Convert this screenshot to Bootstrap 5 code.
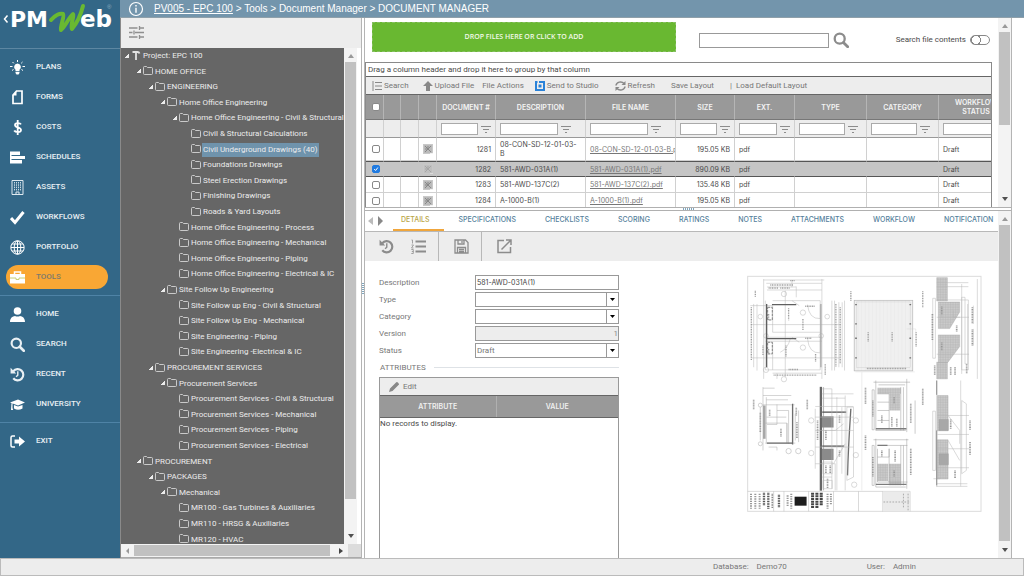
<!DOCTYPE html>
<html lang="en">
<head>
<meta charset="utf-8">
<meta name="viewport" content="width=device-width, initial-scale=1">
<title>PMWeb - Document Manager</title>
<link href="https://cdn.jsdelivr.net/npm/bootstrap@5.3.0/dist/css/bootstrap.min.css" rel="stylesheet">
<style>
  :root { --blue:#336787; --bar:#7395ac; --pane:#ededed; --line:#b4b4b4; --ink:#4a4a4a; --soft:#737373; --wide:Inter,"Liberation Sans",sans-serif; }
  body { font:8px/12px Roboto,"Liberation Sans",sans-serif; color:var(--ink); background:#fff; }
  a { color:inherit; }
  svg { display:block; flex:none; }
  button { border:0; padding:0; background:none; color:inherit; font:inherit; }
  .app { height:100vh; }
  .min0 { min-width:0; min-height:0; }

  /* left navigation */
  .side { width:120px; background:var(--blue); color:#e9f0f4; }
  .brandbar { height:49px; border-bottom:1px solid #5d87a2; }
  .group { padding:3px 0; }
  .group + .group { border-top:1px solid #4f83a6; }
  .side .nav-link { height:30px; padding:0 0 0 10px; gap:11px; color:#e9f0f4; font-size:8px; font-weight:500; display:flex; align-items:center; }
  .side .nav-link.on { height:24px; margin:3px 12px 3px 6px; padding-left:4px; border-radius:12px; background:#f9a734; color:#7c7a6c; }

  /* title bar */
  .titlebar { height:18px; background:var(--bar); border-bottom:1px solid #8fa0aa; color:#fff; font:500 10px/17px "Liberation Sans",sans-serif; padding-left:8px; gap:10px; }

  /* scroll bars */
  .vbar { width:13px; background:#f3f3f3; flex:none; padding:5px 1px; }
  .vbar i { background:#c1c1c1; display:block; }
  .hbar { height:14px; background:#f3f3f3; flex:none; border-bottom:1px solid #aaa; padding-left:4px; gap:4px; }
  .hbar i { background:#c1c1c1; display:block; height:11px; flex:1; }
  .hbar b { background:#dcdcdc; width:13px; align-self:stretch; }

  /* project tree */
  .treepane { width:241px; border-left:1px solid #8a8a8a; }
  .treetools { height:30px; background:var(--pane); padding:0 0 2px 8px; }
  .tree { background:#666; color:#ececec; font-weight:400; }
  .tree li { height:16px; display:flex; align-items:center; white-space:nowrap; gap:2px; padding-left:3px; }
  .tree li:nth-child(5n+2), .tree li:nth-child(5n+4) { height:15px; }
  .tree li::before { content:""; width:5px; height:5px; flex:none; }
  .tree li.open::before { background:linear-gradient(135deg,transparent 50%,#ececec 50%) right bottom/4px 4px no-repeat; margin-bottom:2px; }
  .tree svg { margin-bottom:2px; }
  .tree .l1 { padding-left:15px; } .tree .l2 { padding-left:27px; } .tree .l3 { padding-left:39px; }
  .tree .l4 { padding-left:51px; } .tree .l5 { padding-left:63px; }
  .tree .sel { background:#6f93ac; outline:1px solid #6f93ac; }
  .split { width:4px; border:solid var(--line); border-width:0 1px; background:#fff; }
  .grip { width:2px; height:11px; background:repeating-linear-gradient(#7fa5bd 0 1px,transparent 1px 2px); }
  .hsplit { height:4px; border:solid #b0b0b0; border-width:1px 0; background:#fff; }
  .hgrip { width:11px; height:2px; background:repeating-linear-gradient(90deg,#7fa5bd 0 1px,transparent 1px 2px); }

  /* documents pane */
  .work { border-right:1px solid var(--line); margin-right:12px; }
  .docs { flex:0 0 35%; }
  .uploadbar { height:44px; padding:0 8px 0 7px; }
  .drop { width:304px; height:30px; background:#69b831; color:#f2f9e9; border:1px dashed #86bf62; font:600 7px/28px "Open Sans",sans-serif; margin-right:23px; }
  .find { width:130px; height:15px; border:1px solid #999; padding:0 3px; font:inherit; }
  .toggle { appearance:none; width:20px; height:10px; border:1px solid #888; border-radius:5px; margin:0; background:radial-gradient(circle at 5px 4px,#fff 4px,#888 4px,#888 5px,#fff 5px); }
  .gridbox { border:solid #8a8a8a; border-width:1px 1px 0; margin-right:6px; }
  .grouphint { height:14px; line-height:14px; padding-left:2px; border-bottom:1px solid #666; }
  .gridtools { height:18px; background:var(--pane); color:#777; border-bottom:1px solid #666; padding-left:6px; white-space:nowrap; }
  .gridtools button { display:flex; align-items:center; gap:2px; }
  .grid { table-layout:fixed; width:648px; border-collapse:separate; border-spacing:0; font:7px/9px var(--wide); }
  .grid th { background:#999; color:#f4f4f4; height:25px; text-align:center; font-weight:600; border-right:1px solid #b5b5b5; border-bottom:1px solid #777; padding:0 2px; }
  .grid td { height:16px; padding:0 4px; border-right:1px solid #d0d0d0; border-bottom:1px solid #d0d0d0; overflow:hidden; white-space:nowrap; }
  .grid .filters td { height:18px; background:var(--pane); border-bottom-color:#999; }
  .grid .filters input { height:12px; min-width:0; flex:1; border:1px solid #aaa; font-size:7px; padding:0 2px; }
  .grid .filters div { gap:3px; }
  .grid .filters .roomy { padding-right:10px; }
  .grid .num { text-align:right; }
  .grid .wrapcell { white-space:normal; }
  .grid .tall td { height:23px; }
  .grid .chosen td { background:#c5c5c5; border-right-color:#c5c5c5; border-bottom-color:#555; border-top:1px solid #555; }
  .grid a { color:#777; }
  .grid .check { padding:0 0 0 2px; }
  .tick { appearance:none; display:block; width:8px; height:8px; margin:0 auto; border:1px solid #888; border-radius:2px; background:#fff; }
  .tick:checked { border-color:#1f7ae0; background:#1f7ae0 url("data:image/svg+xml,%3Csvg xmlns='http://www.w3.org/2000/svg' viewBox='0 0 8 8'%3E%3Cpath d='M1.5 4l2 2 3-4' fill='none' stroke='white' stroke-width='1.3'/%3E%3C/svg%3E"); }
  .thumb { width:10px; height:10px; }

  /* details pane */
  .tabs { height:21px; border-bottom:1px solid #b8b8b8; padding-left:3px; white-space:nowrap; gap:10px; }
  .tabs .nav-link { height:20px; padding:0 14px 0 15px; font:500 7px/17px var(--wide); color:#557f9c; }
  .tabs .nav-link.active { padding-left:8px; color:#b9a548; border-bottom:2px solid #f0a63c; }
  .acts { height:29px; background:var(--pane); }
  .acts > div { border-right:1px solid #b8b8b8; gap:17px; padding:0 12px 0 15px; display:flex; align-items:center; }
  .acts > div:first-child { padding-left:14px; }
  .acts > div:last-child { border:0; }
  .fields { width:240px; row-gap:2px; display:grid; grid-template-columns:96px 1fr; color:#777; align-items:center; }
  .fields input, .fields select { height:15px; width:100%; border:1px solid #999; border-radius:0; padding:0 1px; font:inherit; color:#555; background:#fff; appearance:none; }
  .fields select { color:#777; background:#fff url("data:image/svg+xml,%3Csvg xmlns='http://www.w3.org/2000/svg' width='12' height='13'%3E%3Cpath d='M.5 0v13' stroke='%23999'/%3E%3Cpath d='M4 5h5L6.500 8z'/%3E%3C/svg%3E") right no-repeat; }
  .fields input[readonly] { background:var(--pane); text-align:right; padding:0; color:#888; }
  .fields input.strong { font:7px var(--wide); color:#444; }
  .attrs { width:240px; border:1px solid #999; border-bottom:0; }
  .attrtools { height:18px; background:var(--pane); border-bottom:1px solid #666; color:#777; padding-left:9px; }
  .attrs table { table-layout:fixed; width:100%; }
  .attrs th { height:21px; background:#999; color:#f0f0f0; text-align:center; font:600 7px/9px var(--wide); border-bottom:1px solid #666; }
  .attrs th:first-child { width:116px; }
  .attrs th + th { border-left:1px solid #b0b0b0; }
  .attrs td { padding:0; line-height:11px; }
  .sheet { width:235px; }
  .foot { height:18px; background:var(--pane); border:1px solid #bbb; color:#777; padding-right:107px; gap:8px; }
  .foot .user { margin-left:72px; }
</style>
</head>
<body>
<svg width="0" height="0" class="position-absolute" aria-hidden="true">
  <symbol id="folder" viewBox="0 0 10 9"><path d="M.5 7.500V1.500Q.5.5 1.500.5H3.500L4.500 1.500H8.500Q9.500 1.500 9.500 2.500V7.500Q9.500 8.500 8.500 8.500H1.500Q.5 8.500.5 7.500Z" fill="none" stroke="#d6d6d6" stroke-width=".9"/></symbol>
  <symbol id="funnel" viewBox="0 0 10 8"><path d="M0 1.500h10M2 4.500h6M4 7.500h2" stroke="#8c8c8c"/></symbol>
  <symbol id="pic" viewBox="0 0 10 10"><path d="M0 0h10v10H0z" fill="#c9c9c9"/><path d="M1 1h8v8H1z" fill="#bababa"/><path d="M2 2l6 6M8 2L2 8M5 2v3M2 5h3" stroke="#888" fill="none"/><path d="M7 9h3v1H7z" fill="#f2f2f2"/></symbol>
  <symbol id="up" viewBox="0 0 11 6"><path d="M3 5h6L6 1z" fill="#999"/></symbol>
  <symbol id="down" viewBox="0 0 11 6"><path d="M3 1h6L6 5z" fill="#505050"/></symbol>
  <symbol id="recent" viewBox="0 0 16 16"><path d="M3.500 4.500A6 6 0 1 1 3.500 12" fill="none" stroke="currentColor" stroke-width="2.300"/><path d="M.6.8v6h6z" fill="currentColor"/><path d="M8.300 4.500v4.200L6.500 10.500" fill="none" stroke="currentColor" stroke-width="1.500"/></symbol>
  <symbol id="lens" viewBox="0 0 16 16"><circle cx="6.700" cy="6.700" r="5" fill="none" stroke="currentColor" stroke-width="2.300"/><path d="M10.400 10.400l4.300 4.300" stroke="currentColor" stroke-width="2.800" stroke-linecap="round"/></symbol>
</svg>

<div class="app d-flex flex-column overflow-hidden">
  <div class="d-flex flex-grow-1 min0">
    <nav class="side flex-shrink-0" aria-label="Main">
      <div class="brandbar">
        <a href="#" aria-label="PMWeb home"><svg width="120" height="48" viewBox="0 0 120 48"><path d="M7.500 15.500L4.500 19l3 3.500" fill="none" stroke="#fff" stroke-width="1.500"/><g fill="#fff" font-family="DejaVu Sans,sans-serif" font-weight="700"><text x="10" y="27" font-size="22">PM</text><text x="80" y="27" font-size="23">eb</text></g><path d="M51 20C55 15 60 13 63 14C65 16 60 26 61 30C65 27 69 17 73 14C75 15 70 24 72 29C77 23 81 14 83 6" fill="none" stroke="#69b831" stroke-width="4" stroke-linejoin="round" stroke-linecap="round"/><text x="107" y="9" font-size="6" fill="#91afc1" font-family="Liberation Sans,sans-serif">®</text></svg></a>
      </div>
      <div class="group nav flex-column flex-nowrap">
        <a class="nav-link" href="#"><svg width="15" height="15" viewBox="0 0 15 15" fill="#fff"><path d="M7.500 3.500a3.500 3.500 0 0 1 2 6.300V11h-4V9.800a3.500 3.500 0 0 1 2-6.300zM5.500 11.800h4v1.200L8.500 14.500h-2L5.500 13z"/><path d="M7.500 0v2M2.500 2l1.300 1.300M12.500 2l-1.300 1.300M0 6.500h2.500M12.500 6.500H15M2 10.500l1.500-1M13 10.500l-1.500-1" stroke="#fff"/></svg>PLANS</a>
        <a class="nav-link" href="#"><svg width="15" height="15" viewBox="0 0 15 15"><path d="M6.500 1h5.500v12.500H3V5z" fill="none" stroke="#fff" stroke-width="1.700"/><path d="M6.500.5V5.500H2.500z" fill="#fff"/></svg>FORMS</a>
        <a class="nav-link" href="#"><svg width="15" height="15" viewBox="0 0 15 15"><path d="M11 4.300C10.200 2.800 5 2.200 5 5c0 3 6 1.800 6 5 0 3-5.800 2.500-6.800.5M7.700 0v15" fill="none" stroke="#fff" stroke-width="1.800"/></svg>COSTS</a>
        <a class="nav-link" href="#"><svg width="15" height="15" viewBox="0 0 15 15" fill="#fff"><path d="M0 1.500h10V5H0zM0 6h15v3H0zM0 10h12v3.500H0zM0 1.500h1.500v12H0z"/></svg>SCHEDULES</a>
        <a class="nav-link" href="#"><svg width="15" height="15" viewBox="0 0 15 15"><path d="M2 .5h11v14H2zM6 14.500V12h3v2.500" fill="none" stroke="#dfe9ef"/><path d="M4.500 2v9M6.500 2v9M8.500 2v9M10.500 2v9" stroke="#c9dae4" stroke-dasharray="1.500 .8"/></svg>ASSETS</a>
        <a class="nav-link" href="#"><svg width="15" height="15" viewBox="0 0 15 15"><path d="M1 8l4 4.500L13.500 2" fill="none" stroke="#fff" stroke-width="3"/></svg>WORKFLOWS</a>
        <a class="nav-link" href="#"><svg width="15" height="15" viewBox="0 0 15 15" fill="none" stroke="#fff"><circle cx="7.500" cy="7.500" r="6.700"/><ellipse cx="7.500" cy="7.500" rx="3.300" ry="6.700"/><path d="M7.500 1v13M1 7.500h13M2 4h11M2 11h11"/></svg>PORTFOLIO</a>
        <a class="nav-link on" href="#" aria-current="page"><svg width="15" height="15" viewBox="0 0 15 15"><path d="M4.500 4V2h6v2" fill="none" stroke="#fff" stroke-width="1.500"/><path d="M0 4h15v9.500H0z" fill="#fff"/><path d="M0 8h6v1.500h3V8h6" fill="none" stroke="#c5cf78"/></svg>TOOLS</a>
      </div>
      <div class="group nav flex-column flex-nowrap">
        <a class="nav-link" href="#"><svg width="15" height="15" viewBox="0 0 15 15" fill="#fff"><circle cx="7.500" cy="4" r="3.800"/><path d="M0 15c0-4 2.500-5.800 5-6q2.500 1 5 0c2.500.2 5 2 5 6z"/></svg>HOME</a>
        <a class="nav-link" href="#"><svg width="15" height="15"><use href="#lens"/></svg>SEARCH</a>
        <a class="nav-link" href="#"><svg width="15" height="15"><use href="#recent"/></svg>RECENT</a>
        <a class="nav-link" href="#"><svg width="15" height="15" viewBox="0 0 15 15" fill="#fff"><path d="M0 5.500L8 2.500l7 3-7 3zM4 8l4 1.500L12.500 8v3.500Q8 14 4 11.500zM1.500 6h1v5l.7 2H1z"/></svg>UNIVERSITY</a>
      </div>
      <div class="group nav flex-column flex-nowrap">
        <a class="nav-link" href="#"><svg width="15" height="15" viewBox="0 0 15 15"><path d="M5 2H2.500Q1 2 1 3.500v8Q1 13 2.500 13H5" fill="none" stroke="#fff" stroke-width="1.500"/><path d="M4.500 5.500H9v-3l6 5-6 5v-3H4.500z" fill="#fff"/></svg>EXIT</a>
      </div>
    </nav>

    <div class="d-flex flex-column flex-grow-1 min0">
      <header class="titlebar d-flex align-items-center flex-shrink-0">
        <svg width="16" height="16" viewBox="0 0 16 16"><circle cx="8" cy="8" r="6.500" fill="none" stroke="#fff" stroke-width="1.200"/><path d="M8 4v1.500M8 6.800v5" stroke="#fff" stroke-width="1.400"/></svg>
        <div><a href="#">PV005 - EPC 100</a> &gt; Tools &gt; Document Manager &gt; DOCUMENT MANAGER</div>
      </header>

      <div class="d-flex flex-grow-1 min0">
        <aside class="treepane d-flex flex-column flex-shrink-0">
          <div class="treetools d-flex align-items-center flex-shrink-0">
            <button type="button" aria-label="Settings"><svg width="15" height="15" viewBox="0 0 15 15" stroke="#8f8f8f" stroke-width="1.300"><path d="M0 3h8.500M11 3h4M0 7.500h3.500M6 7.500h9M0 12h8.500M11 12h4M10.500 1v4M5 5.500v4M10.500 10v4"/></svg></button>
          </div>
          <div class="d-flex flex-grow-1 min0">
            <ul class="tree list-unstyled m-0 flex-grow-1 overflow-hidden">
              <li class="open"><svg width="10" height="10" viewBox="0 0 10 10"><path d="M1.500 2h5q1.500 0 2 1.500M5 1.500V10" fill="none" stroke="#e3e3e3" stroke-width="1.800"/></svg>Project: EPC 100</li>
              <li class="open l1"><svg width="10" height="9"><use href="#folder"/></svg>HOME OFFICE</li>
              <li class="open l2"><svg width="10" height="9"><use href="#folder"/></svg>ENGINEERING</li>
              <li class="open l3"><svg width="10" height="9"><use href="#folder"/></svg>Home Office Engineering</li>
              <li class="open l4"><svg width="10" height="9"><use href="#folder"/></svg>Home Office Engineering - Civil &amp; Structural</li>
              <li class="l5"><svg width="10" height="9"><use href="#folder"/></svg>Civil &amp; Structural Calculations</li>
              <li class="l5"><svg width="10" height="9"><use href="#folder"/></svg><span class="sel">Civil Underground Drawings (40)</span></li>
              <li class="l5"><svg width="10" height="9"><use href="#folder"/></svg>Foundations Drawings</li>
              <li class="l5"><svg width="10" height="9"><use href="#folder"/></svg>Steel Erection Drawings</li>
              <li class="l5"><svg width="10" height="9"><use href="#folder"/></svg>Finishing Drawings</li>
              <li class="l5"><svg width="10" height="9"><use href="#folder"/></svg>Roads &amp; Yard Layouts</li>
              <li class="l4"><svg width="10" height="9"><use href="#folder"/></svg>Home Office Engineering - Process</li>
              <li class="l4"><svg width="10" height="9"><use href="#folder"/></svg>Home Office Engineering - Mechanical</li>
              <li class="l4"><svg width="10" height="9"><use href="#folder"/></svg>Home Office Engineering - Piping</li>
              <li class="l4"><svg width="10" height="9"><use href="#folder"/></svg>Home Office Engineering - Electrical &amp; IC</li>
              <li class="open l3"><svg width="10" height="9"><use href="#folder"/></svg>Site Follow Up Engineering</li>
              <li class="l4"><svg width="10" height="9"><use href="#folder"/></svg>Site Follow up Eng - Civil &amp; Structural</li>
              <li class="l4"><svg width="10" height="9"><use href="#folder"/></svg>Site Follow Up Eng - Mechanical</li>
              <li class="l4"><svg width="10" height="9"><use href="#folder"/></svg>Site Engineering - Piping</li>
              <li class="l4"><svg width="10" height="9"><use href="#folder"/></svg>Site Engineering -Electrical &amp; IC</li>
              <li class="open l2"><svg width="10" height="9"><use href="#folder"/></svg>PROCUREMENT SERVICES</li>
              <li class="open l3"><svg width="10" height="9"><use href="#folder"/></svg>Procurement Services</li>
              <li class="l4"><svg width="10" height="9"><use href="#folder"/></svg>Procurement Services - Civil &amp; Structural</li>
              <li class="l4"><svg width="10" height="9"><use href="#folder"/></svg>Procurement Services - Mechanical</li>
              <li class="l4"><svg width="10" height="9"><use href="#folder"/></svg>Procurement Services - Piping</li>
              <li class="l4"><svg width="10" height="9"><use href="#folder"/></svg>Procurement Services - Electrical</li>
              <li class="open l1"><svg width="10" height="9"><use href="#folder"/></svg>PROCUREMENT</li>
              <li class="open l2"><svg width="10" height="9"><use href="#folder"/></svg>PACKAGES</li>
              <li class="open l3"><svg width="10" height="9"><use href="#folder"/></svg>Mechanical</li>
              <li class="l4"><svg width="10" height="9"><use href="#folder"/></svg>MR100 - Gas Turbines &amp; Auxiliaries</li>
              <li class="l4"><svg width="10" height="9"><use href="#folder"/></svg>MR110 - HRSG &amp; Auxiliaries</li>
              <li class="l4"><svg width="10" height="9"><use href="#folder"/></svg>MR120 - HVAC</li>
            </ul>
            <div class="vbar d-flex flex-column me-1"><svg width="11" height="6"><use href="#up"/></svg><i style="height:90%;margin-top:3px"></i><svg class="mt-auto" width="11" height="6"><use href="#down"/></svg></div>
          </div>
          <div class="hbar d-flex align-items-center">
            <svg width="5" height="8" viewBox="0 0 5 8"><path d="M4 1v6L1 4z" fill="#999"/></svg><i></i>
            <svg class="ms-1" width="6" height="8" viewBox="0 0 6 8"><path d="M1 1v6l4-3z" fill="#444"/></svg><b></b>
          </div>
        </aside>
        <div class="split d-flex align-items-center flex-shrink-0"><div class="grip"></div></div>

        <main class="work d-flex flex-column flex-grow-1 min0">
          <section class="docs d-flex min0 overflow-hidden">
            <div class="flex-grow-1 min0 overflow-hidden d-flex flex-column">
              <div class="uploadbar d-flex align-items-center flex-shrink-0">
                <button class="drop align-self-start mt-1" type="button">DROP FILES HERE OR CLICK TO ADD</button>
                <input class="find" type="search" aria-label="Search files">
                <button class="ms-1" type="button" aria-label="Search" style="color:#8c8c8c"><svg width="16" height="16"><use href="#lens"/></svg></button>
                <label class="ms-auto me-1" for="contents">Search file contents</label>
                <input class="toggle" type="checkbox" role="switch" id="contents">
              </div>
              <div class="gridbox flex-grow-1 min0 overflow-hidden">
                <div class="grouphint">Drag a column header and drop it here to group by that column</div>
                <div class="gridtools d-flex align-items-center">
                  <button type="button"><svg width="10" height="10" viewBox="0 0 10 10" stroke="#888"><path d="M3 1.500h7M3 5h7M3 8.500h7M1 0v10"/></svg>Search</button>
                  <button type="button" style="margin-left:14px"><svg width="10" height="10" viewBox="0 0 10 10"><path d="M5 0l5 5H7v5H3V5H0z" fill="#888"/></svg>Upload File</button>
                  <button type="button" class="ms-2">File Actions</button>
                  <button type="button" style="margin-left:11px"><svg width="10" height="10" viewBox="0 0 10 10"><path d="M2.500 1H1v8h8V1H4" fill="none" stroke="#2a82d8" stroke-width="2"/><path d="M3.500 3.500h3v3h-3z" fill="#2a82d8"/></svg>Send to Studio</button>
                  <button type="button" class="ms-3"><svg width="11" height="10" viewBox="0 0 11 10"><path d="M1 4.500A4.500 4 0 0 1 9 2.500M10 5.500A4.500 4 0 0 1 2 7.500" fill="none" stroke="#888" stroke-width="1.500"/><path d="M10.500 0v4h-4zM.5 10V6h4z" fill="#888"/></svg>Refresh</button>
                  <button type="button" class="ms-3">Save Layout</button>
                  <span class="ms-3">|</span>
                  <button type="button" class="ms-1">Load Default Layout</button>
                </div>
                <table class="grid">
                  <colgroup><col style="width:18px"><col style="width:17px"><col style="width:18px"><col style="width:18px"><col style="width:59px"><col style="width:90px"><col style="width:90px"><col style="width:59px"><col style="width:60px"><col style="width:72px"><col style="width:72px"><col style="width:75px"></colgroup>
                  <thead><tr><th class="check"><input class="tick" type="checkbox" aria-label="Select all"></th><th></th><th></th><th></th><th>DOCUMENT #</th><th>DESCRIPTION</th><th>FILE NAME</th><th>SIZE</th><th>EXT.</th><th>TYPE</th><th>CATEGORY</th><th>WORKFLOW STATUS</th></tr></thead>
                  <tbody>
                    <tr class="filters"><td></td><td></td><td></td><td></td>
                      <td><div class="d-flex align-items-center"><input aria-label="Filter document"><svg width="10" height="8"><use href="#funnel"/></svg></div></td>
                      <td><div class="d-flex align-items-center roomy"><input aria-label="Filter description"><svg width="10" height="8"><use href="#funnel"/></svg></div></td>
                      <td><div class="d-flex align-items-center roomy"><input aria-label="Filter file name"><svg width="10" height="8"><use href="#funnel"/></svg></div></td>
                      <td><div class="d-flex align-items-center"><input aria-label="Filter size"><svg width="10" height="8"><use href="#funnel"/></svg></div></td>
                      <td><div class="d-flex align-items-center"><input aria-label="Filter extension"><svg width="10" height="8"><use href="#funnel"/></svg></div></td>
                      <td><div class="d-flex align-items-center pe-1"><input aria-label="Filter type"><svg width="10" height="8"><use href="#funnel"/></svg></div></td>
                      <td><div class="d-flex align-items-center pe-1"><input aria-label="Filter category"><svg width="10" height="8"><use href="#funnel"/></svg></div></td>
                      <td><div class="d-flex"><input aria-label="Filter workflow status"></div></td></tr>
                    <tr class="tall"><td class="check"><input class="tick" type="checkbox" aria-label="Select 1281"></td><td></td><td></td><td><svg class="thumb"><use href="#pic"/></svg></td><td class="num">1281</td><td class="wrapcell">08-CON-SD-12-01-03-B</td><td><a href="#">08-CON-SD-12-01-03-B.pdf</a></td><td class="num">195.05 KB</td><td>pdf</td><td></td><td></td><td>Draft</td></tr>
                    <tr class="chosen"><td class="check"><input class="tick" type="checkbox" checked aria-label="Select 1282"></td><td></td><td></td><td><svg class="thumb opacity-50"><use href="#pic"/></svg></td><td class="num">1282</td><td>581-AWD-031A(1)</td><td><a href="#">581-AWD-031A(1).pdf</a></td><td class="num">890.09 KB</td><td>pdf</td><td></td><td></td><td>Draft</td></tr>
                    <tr><td class="check"><input class="tick" type="checkbox" aria-label="Select 1283"></td><td></td><td></td><td><svg class="thumb"><use href="#pic"/></svg></td><td class="num">1283</td><td>581-AWD-137C(2)</td><td><a href="#">581-AWD-137C(2).pdf</a></td><td class="num">135.48 KB</td><td>pdf</td><td></td><td></td><td>Draft</td></tr>
                    <tr><td class="check"><input class="tick" type="checkbox" aria-label="Select 1284"></td><td></td><td></td><td><svg class="thumb"><use href="#pic"/></svg></td><td class="num">1284</td><td>A-1000-B(1)</td><td><a href="#">A-1000-B(1).pdf</a></td><td class="num">195.05 KB</td><td>pdf</td><td></td><td></td><td>Draft</td></tr>
                  </tbody>
                </table>
              </div>
            </div>
            <div class="vbar d-flex flex-column"><svg width="11" height="6"><use href="#up"/></svg><i style="height:52%;margin-top:3px"></i><svg class="mt-auto" width="11" height="6"><use href="#down"/></svg></div>
          </section>
          <div class="hsplit d-flex justify-content-center flex-shrink-0"><div class="hgrip"></div></div>

          <section class="d-flex flex-grow-1 min0 overflow-hidden">
            <div class="flex-grow-1 min0 overflow-hidden d-flex flex-column">
              <div class="tabs d-flex flex-shrink-0">
                <svg class="align-self-center" width="15" height="10" viewBox="0 0 15 10"><path d="M5 1v8L0 5z" fill="#bbb"/><path d="M10 0v10l5-5z" fill="#888"/></svg>
                <nav class="nav flex-nowrap overflow-hidden flex-grow-1 min0" aria-label="Record sections">
                  <a class="nav-link active" href="#">DETAILS</a><a class="nav-link" href="#">SPECIFICATIONS</a><a class="nav-link" href="#">CHECKLISTS</a><a class="nav-link" href="#">SCORING</a><a class="nav-link" href="#">RATINGS</a><a class="nav-link" href="#">NOTES</a><a class="nav-link" href="#">ATTACHMENTS</a><a class="nav-link" href="#">WORKFLOW</a><a class="nav-link pe-0" href="#">NOTIFICATION</a>
                </nav>
              </div>
              <div class="acts d-flex flex-shrink-0">
                <div style="color:#8c8c8c"><button type="button" aria-label="History"><svg width="15" height="15"><use href="#recent"/></svg></button>
                  <button type="button" aria-label="Numbered list"><svg width="15" height="15" viewBox="0 0 15 15"><path d="M4.500 2.500H15M4.500 7.500H15M4.500 12.500H15" stroke="#8c8c8c" stroke-width="1.800"/><path d="M.5 1h1v3.500M.5 6h2L.5 9h2M.3 10.500h2v4h-2M.8 12.500h1.500" fill="none" stroke="#999" stroke-width=".9"/></svg></button></div>
                <div><button type="button" aria-label="Save"><svg width="15" height="15" viewBox="0 0 15 15" fill="none" stroke="#8c8c8c" stroke-width="1.300"><path d="M1 1h10.500L14 3.500V14H1zM4 1v4h6V1M3.500 14V8.500h8V14M5 10.500h5M5 12.500h5M8 2v2"/></svg></button></div>
                <div><button type="button" aria-label="Open in new window"><svg width="15" height="15" viewBox="0 0 15 15" fill="none" stroke="#8c8c8c" stroke-width="1.500"><path d="M7 1.500H1v12h12.500V8M9 1h5v5M14 1L4.500 10.500"/></svg></button></div>
              </div>
              <div class="d-flex flex-grow-1 min0" style="padding:14px 16px 0 14px">
                <div class="d-flex flex-column">
                  <div class="fields">
                    <label for="desc">Description</label><input class="strong" id="desc" value="581-AWD-031A(1)">
                    <label for="type">Type</label><select id="type"><option></option></select>
                    <label for="cat">Category</label><select id="cat"><option></option></select>
                    <label for="ver">Version</label><input id="ver" value="1" readonly>
                    <label for="stat">Status</label><select id="stat"><option>Draft</option></select>
                  </div>
                  <div class="d-flex align-items-center gap-2" style="height:19px;color:#777;padding-left:1px">ATTRIBUTES<span class="flex-grow-1 border-top"></span></div>
                  <div class="attrs flex-grow-1">
                    <div class="attrtools d-flex align-items-center"><button class="d-flex align-items-center gap-1" type="button"><svg width="10" height="10" viewBox="0 0 10 10"><path d="M0 10l1-3.500L7 .5Q8-.5 9.300 1T9.500 3l-6 6z" fill="#888"/></svg>Edit</button></div>
                    <table><thead><tr><th>ATTRIBUTE</th><th>VALUE</th></tr></thead><tbody><tr><td colspan="2">No records to display.</td></tr></tbody></table>
                  </div>
                </div>
                <svg class="sheet ms-auto" viewBox="20 33 706 712" height="237" role="img" aria-label="Drawing preview">
                  <defs>
                    <pattern id="hatch" width="5" height="5" patternUnits="userSpaceOnUse"><path d="M0 0h5v5H0z" fill="#c4c4c4"/><path d="M0 1h5M1 0v5" stroke="#a0a0a0"/></pattern>
                    <pattern id="deck" width="11" height="8" patternUnits="userSpaceOnUse"><path d="M0 0h11v8H0z" fill="#eee"/><path d="M1 0v8" stroke="#dcdcdc"/></pattern>
                  </defs>
                  <rect x="22" y="37" width="701" height="706" fill="#fff" stroke="#dcdcdc" stroke-width="3"/>
                  <g opacity=".85">
                  <!-- floor plan -->
                  <g fill="none" stroke="#aaa" stroke-width="1.500">
                    <path d="M70 48H252M78 58H245M80 69H168M80 78H245M168 68V100M70 45V345M245 45V345M155 48V70M97 110H240V318H75V110M97 125V205H240M97 235V318M75 220H245M75 232H245M97 328H245M50 120V320M40 120V310M275 110V320M283 110V320M296 115V310M306 115V310M313 110V320M30 125H97M35 182H300M35 282H300M135 80V340M110 328V345"/>
                    <path d="M240 122v42q-34 2-38-42M240 225v42q-34 2-38-42M150 225q-8 30-30 40M155 110l22 15M155 220l22 15"/>
                    <circle cx="131" cy="90" r="8"/><circle cx="188" cy="146" r="8"/><circle cx="188" cy="251" r="8"/><circle cx="261" cy="158" r="7"/><circle cx="60" cy="158" r="7"/><circle cx="131" cy="346" r="8"/>
                    <circle cx="77" cy="216" r="7"/><circle cx="243" cy="216" r="7"/><circle cx="77" cy="318" r="8"/>
                  </g>
                  <g stroke="#444"><path d="M79 120V310" stroke-width="4"/><path d="M95 122H168M80 224H168" stroke-width="3.500"/><path d="M242 120V310" stroke="#999" stroke-width="4"/></g>
                  <path d="M82 130h14v38H82zM82 235h14v35H82z" fill="none" stroke="#666" stroke-width="3" stroke-dasharray="8 3"/>
                  <g stroke="#8c8c8c" stroke-width="4" stroke-dasharray="3 2"><path d="M45 80v20M145 133v36M137 245v34M188 165v33M226 270v25M68 245v30M85 150v20M85 255v15M255 300v35M145 317h30M195 127h28M195 223h18M85 72h30M120 72h30M150 50h15M287 120v190M300 130v170M33 130v160M90 63h70M100 334h130"/></g>
                  <!-- roof plan -->
                  <rect x="342" y="109" width="176" height="212" fill="url(#deck)" stroke="#aaa" stroke-width="2"/><rect x="348" y="114" width="164" height="196" fill="none" stroke="#bbb"/>
                  <g fill="#555"><path d="M345 120h5v4h-5zM508 120h5v4h-5zM345 178h5v4h-5zM508 178h5v4h-5zM345 221h5v4h-5zM508 221h5v4h-5zM345 280h5v4h-5zM508 280h5v4h-5z"/></g>
                  <path d="M332 82v30M384 205v30M456 205v30M528 205v45M380 314h120M548 82v48" stroke="#8c8c8c" stroke-width="4" stroke-dasharray="3 2"/>
                  <path d="M346 324H524M500 195h27v20M365 325V680" fill="none" stroke="#c4c4c4"/>
                  <!-- sections, right column -->
                  <g stroke="#888" fill="url(#hatch)"><path d="M590 41h32v70h-32z"/><path d="M590 295h32v50h-32z"/><path d="M595 114h64v30l-30 50h-34zM595 213h64v35l-36 48h-28z"/><path d="M592 395h32v106h-32zM592 528h32v118h-32z"/><path d="M597 467h28v33h-28zM597 570h28v33h-28z" fill="#999"/></g>
                  <g fill="none" stroke="#aaa" stroke-width="1.500"><path d="M590 68h95M590 56h95M590 108h95v210h-20V100h10v200h8V120M590 160h97M590 271h97M665 60v270M578 103v180h8V103zM712 45v300M700 125v55M700 195v50M640 140v20h20M605 130v30"/><path d="M590 350v320M578 442v178h8V442zM624 455l35 45v40M624 530l35 60M592 512h95M592 455h95M592 555h95M592 612h95M665 410l14 10v200l-14 10zM590 660h92M590 668h92M662 350v318M600 645h-20"/></g>
                  <path d="M590 350v43M590 500v165" stroke="#777" stroke-width="3"/>
                  <path d="M605 128v25M605 236v25M697 130v48M697 197v48M577 150v80M650 185v20M632 310v25M645 310v25M680 300v28M584 305v30M548 375v48M690 470v30M690 535v40M632 467v30M645 620v25" stroke="#858585" stroke-width="5" stroke-dasharray="3 2"/>
                  <!-- lower left section -->
                  <g fill="none" stroke="#999" stroke-width="1.500"><path d="M68 370v190M68 373h35M68 395h85M78 408h65M78 400v140M68 423h95M75 538h90M110 422v60h-30M110 440h35M75 478h65v60M78 460h60M140 478v60M85 550h25v10M145 440v100M165 450v80M175 440v95M60 430v100"/><circle cx="145" cy="562" r="8"/><circle cx="174" cy="562" r="8"/><circle cx="60" cy="424" r="6"/><circle cx="60" cy="540" r="6"/></g>
                  <path d="M72 425v100" stroke="#999" stroke-width="8"/><path d="M157 420v122M80 538h78" stroke="#555" stroke-width="4"/>
                  <path d="M40 408v30M201 408v30M60 447v58M170 475v50M88 438v20M122 495v25M168 432v24" stroke="#888" stroke-width="5" stroke-dasharray="3 2"/>
                  <!-- central elevation -->
                  <path d="M242 369v312" stroke="#4c4c4c" stroke-width="7"/><path d="M250 370v310" stroke="#aaa" stroke-width="3"/>
                  <path d="M245 457h35v34h-35zM245 555h35v34h-35z" fill="#777"/><path d="M246 445h72M246 547h66" stroke="#333" stroke-width="4"/>
                  <path d="M332 435q-8 120-10 200" fill="none" stroke="#555" stroke-width="4"/>
                  <g fill="none" stroke="#aaa" stroke-width="1.500"><path d="M245 375h30v300M245 390h95M245 403h70M225 428h115M225 460h115M225 500h115M225 550h115M225 600h60v80M315 395v285M340 430v210l-20 10V430zM245 500h40l25-20M280 600l35-60M245 640h30M225 435v180M290 400v280M305 430v200"/><circle cx="213" cy="470" r="8"/><circle cx="213" cy="568" r="8"/><circle cx="347" cy="470" r="8"/><circle cx="347" cy="574" r="8"/><circle cx="342" cy="663" r="8"/><path d="M248 595v35h28v-35zM248 650v25h28v-25z"/></g>
                  <path d="M257 500v30M257 605v25M270 605v25M262 645v30M232 470v60M298 455v25M298 560v20" stroke="#888" stroke-width="5" stroke-dasharray="3 2"/>
                  <!-- centre right elevations -->
                  <path d="M412 372h70v18h-70zM448 390h32v50h-32zM412 600h32v52h-32zM446 600h36v65h-36z" fill="url(#hatch)"/>
                  <g fill="none" stroke="#888" stroke-width="1.500"><path d="M407 350v150h90M400 355h110M415 363h80M412 390h35v50h-35M412 415h35M447 440v56M412 470h35M482 370v130M490 370v130M500 345v160M396 378v120h6V378zM407 525v145h90M400 528h105M412 545h90M412 555v100h90M412 580h35v-25M447 555v100M482 545v120M490 545v120M500 525v150M396 545v120h6V545zM525 410v100"/></g>
                  <path d="M407 495h92M407 662h92M412 545h30" stroke="#666" stroke-width="4"/>
                  <path d="M376 372v48M376 515v45M512 420v60M512 555v80M398 410v50M398 580v60M425 455v25M455 460v30M425 560v20M465 560v35M462 400v20M462 620v20M470 465v25" stroke="#858585" stroke-width="5" stroke-dasharray="3 2"/>
                  </g>
                  <!-- title block -->
                  <g fill="none" stroke="#b5b5b5" stroke-width="1.500"><path d="M22 683H510V743M100 683v60M131 683v60M205 683v60M280 683v60M355 683v60M427 683v60"/></g>
                  <path d="M427 684h83v58h-83z" fill="#ebebeb"/><path d="M430 715h80M490 690v45M504 690v50" stroke="#aaa" stroke-width="3" stroke-dasharray="5 4"/>
                  <path d="M163 699h36v27h-36z" fill="#1c1c1c"/>
                  <path d="M217 687v46M230 687v46M243 687v38" stroke="#444" stroke-width="9" stroke-dasharray="6 2"/>
                  <path d="M32 690v45M45 690v45M58 690v45M142 695v35M153 690v45M262 690v45M272 690v35" stroke="#999" stroke-width="6" stroke-dasharray="4 3"/><path d="M71 687v40M84 687v48M116 693v40" stroke="#555" stroke-width="7" stroke-dasharray="3 2"/><path d="M96 690v45" stroke="#888" stroke-width="5" stroke-dasharray="3 2"/>
                </svg>
              </div>
            </div>
            <div class="vbar d-flex flex-column"><svg width="11" height="6"><use href="#up"/></svg><i class="flex-grow-1" style="margin:3px 0 6px"></i><svg width="11" height="6"><use href="#down"/></svg></div>
          </section>
        </main>
      </div>
    </div>
  </div>
  <footer class="foot d-flex align-items-center justify-content-end flex-shrink-0"><span>Database:</span><span>Demo70</span><span class="user">User:</span><span>Admin</span></footer>
</div>
<script src="https://cdn.jsdelivr.net/npm/bootstrap@5.3.0/dist/js/bootstrap.bundle.min.js"></script>
</body>
</html>
